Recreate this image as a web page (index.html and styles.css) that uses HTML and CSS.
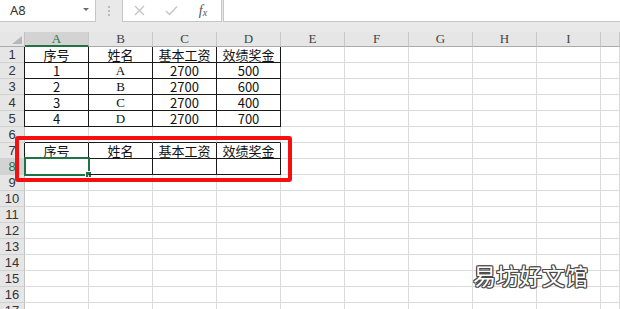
FILE: index.html
```html
<!DOCTYPE html>
<html lang="zh">
<head>
    <meta charset="UTF-8">
    <title>工资表</title>
    <link rel="stylesheet" href="styles.css">
</head>
<body>
    <div class="toolbar">
        <div class="namebox">
            <span>A8</span>
            <span class="caret"></span>
        </div>
        <div class="grip">
            <svg width="4" height="14" viewBox="0 0 4 14"><rect x="1" y="2" width="2" height="2"/><rect x="1" y="6" width="2" height="2"/><rect x="1" y="10" width="2" height="2"/></svg>
        </div>
        <div class="fnbtns">
            <span class="fnbtn">
                <svg width="11" height="11" viewBox="0 0 11 11"><path d="M1 1L10 10M10 1L1 10" stroke="#c4c4c4" stroke-width="1.3" fill="none"/></svg>
            </span>
            <span class="fnbtn">
                <svg width="13" height="11" viewBox="0 0 13 11"><path d="M1 6L4.5 9.5L12 1.5" stroke="#c4c4c4" stroke-width="1.4" fill="none"/></svg>
            </span>
            <span class="fnbtn fx"><i>f</i><small>x</small></span>
        </div>
        <div class="fbar"></div>
    </div>

    <div class="sheet" id="sheet"></div>

    <div class="mark-box"></div>
    <div class="watermark">易坊好文馆</div>

    <script>
        // last column (J) is only partly in view, so its label stays empty
        var cols = ['A', 'B', 'C', 'D', 'E', 'F', 'G', 'H', 'I', ''];
        var title = ['序号', '姓名', '基本工资', '效绩奖金'];
        var data = {
            1: title,
            2: ['1', 'A', '2700', '500'],
            3: ['2', 'B', '2700', '600'],
            4: ['3', 'C', '2700', '400'],
            5: ['4', 'D', '2700', '700'],
            7: title,
            8: ['', '', '', '']
        };
        var sheet = document.getElementById('sheet');

        function cell(cls, text) {
            var el = document.createElement('div');
            el.className = cls;
            el.textContent = text || '';
            sheet.appendChild(el);
            return el;
        }

        // column headers
        cell('corner');
        cols.forEach(function (c) {
            cell(c === 'A' ? 'colhead active' : 'colhead', c);
        });

        // rows (the last one is cut by the window)
        for (var r = 1; r <= 17; r++) {
            cell(r === 8 ? 'rowhead active' : 'rowhead', r);
            for (var i = 0; i < cols.length; i++) {
                var row = data[r];
                var cls = 'cell';
                var text = '';
                if (row && i < 4) {
                    cls += ' bd';
                    if (i === 0) cls += ' first';
                    text = row[i];
                    if (/^[A-Z]$/.test(text)) cls += ' latin';
                }
                if (r === 6 && i < 4) cls += ' bb';
                var el = cell(cls, text);
                if (r === 8 && i === 0) {
                    var sel = document.createElement('div');
                    sel.className = 'selection';
                    el.appendChild(sel);
                }
            }
        }
    </script>
</body>
</html>
```

FILE: styles.css
```css
body {
    margin: 0;
    width: 620px;
    height: 309px;
    overflow: hidden;
    position: relative;
    background-color: #fff;
    font-family: "Noto Sans CJK SC", sans-serif;
}

/* formula bar */
.toolbar {
    display: flex;
    align-items: flex-start;
    height: 32px;
    background-color: #e9e9e9;
}

.namebox {
    width: 96px;
    height: 22px;
    box-sizing: border-box;
    background-color: #fff;
    border-right: 1px solid #c6c6c6;
    border-bottom: 1px solid #c6c6c6;
    display: flex;
    align-items: center;
    justify-content: space-between;
    padding: 0 6px 1px 10px;
    font: 13px "Noto Sans", sans-serif;
    color: #333;
}

.caret {
    width: 0;
    height: 0;
    border-left: 3px solid transparent;
    border-right: 3px solid transparent;
    border-top: 3px solid #6a6a6a;
    margin-bottom: 1px;
}

.grip {
    width: 26px;
    height: 21px;
    display: flex;
    align-items: center;
    justify-content: center;
    fill: #b9b9b9;
}

.fnbtns {
    width: 100px;
    height: 22px;
    box-sizing: border-box;
    background-color: #fff;
    border-left: 1px solid #c6c6c6;
    border-right: 1px solid #c6c6c6;
    border-bottom: 1px solid #c6c6c6;
    display: flex;
    align-items: center;
}

.fnbtn {
    width: 32px;
    display: flex;
    justify-content: center;
    align-items: center;
}

.fx {
    font-family: "Liberation Serif", serif;
    color: #555;
    font-size: 14px;
    font-style: italic;
}

.fx small {
    font-size: 10px;
    margin-top: 4px;
}

.fbar {
    flex: 1;
    height: 22px;
    margin-left: 1px;
    box-sizing: border-box;
    background-color: #fff;
    border-left: 1px solid #c6c6c6;
    border-bottom: 1px solid #c6c6c6;
}

/* grid */
.sheet {
    display: grid;
    grid-template-columns: 25px repeat(9, 64px) 1fr;
    grid-template-rows: 15px;
    grid-auto-rows: 16px;
}

.corner {
    background-color: #e6e6e6;
    border-right: 1px solid #c3c3c3;
    border-bottom: 1px solid #ababab;
    position: relative;
}

.corner::after {
    content: "";
    position: absolute;
    right: 2px;
    bottom: 2px;
    width: 0;
    height: 0;
    border-left: 10px solid transparent;
    border-bottom: 8px solid #b8b8b8;
}

.colhead {
    background-color: #e6e6e6;
    border-right: 1px solid #c8c8c8;
    border-bottom: 1px solid #ababab;
    font-family: "Liberation Serif", serif;
    font-size: 13px;
    line-height: 14px;
    color: #444;
    text-align: center;
}

.colhead.active {
    background-color: #d3d3d3;
    color: #217346;
    border-bottom: 2px solid #217346;
}

.rowhead {
    background-color: #e6e6e6;
    border-right: 1px solid #c3c3c3;
    border-bottom: 1px solid #d2d2d2;
    font-family: "Liberation Sans", sans-serif;
    font-size: 13px;
    line-height: 15px;
    color: #333;
    text-align: center;
    overflow: hidden;
}

.rowhead.active {
    background-color: #d3d3d3;
    color: #217346;
}

.cell {
    position: relative;
    border-right: 1px solid #dadada;
    border-bottom: 1px solid #dadada;
    font-size: 13px;
    line-height: 15px;
    color: #111;
    text-align: center;
    white-space: nowrap;
}

.cell.bd {
    border-right-color: #1a1a1a;
    border-bottom-color: #1a1a1a;
}

.cell.first {
    box-shadow: -1px 0 0 #1a1a1a;
}

.cell.bb {
    border-bottom-color: #1a1a1a;
}

.cell.latin {
    font-family: "Liberation Serif", serif;
}

.selection {
    position: absolute;
    top: -2px;
    left: -1px;
    right: -2px;
    bottom: -2px;
    border: 2px solid #217346;
}

.selection::after {
    content: "";
    position: absolute;
    right: -4px;
    bottom: -4px;
    width: 5px;
    height: 5px;
    background-color: #217346;
    border: 1px solid #fff;
}

/* annotation */
.mark-box {
    position: absolute;
    left: 15px;
    top: 136px;
    width: 277px;
    height: 46px;
    box-sizing: border-box;
    border: 4px solid #f50f0f;
    border-radius: 3px;
}

.watermark {
    position: absolute;
    left: 473px;
    top: 261px;
    font-size: 23px;
    line-height: 28px;
    color: #fff;
    text-shadow: 1px 0 0 #4a4a4a, -1px 0 0 #4a4a4a, 0 1px 0 #4a4a4a, 0 -1px 0 #4a4a4a,
        1px 1px 0 #4a4a4a, -1px -1px 0 #4a4a4a, 1px -1px 0 #4a4a4a, -1px 1px 0 #4a4a4a,
        0 0 2px #bbb;
}
```
